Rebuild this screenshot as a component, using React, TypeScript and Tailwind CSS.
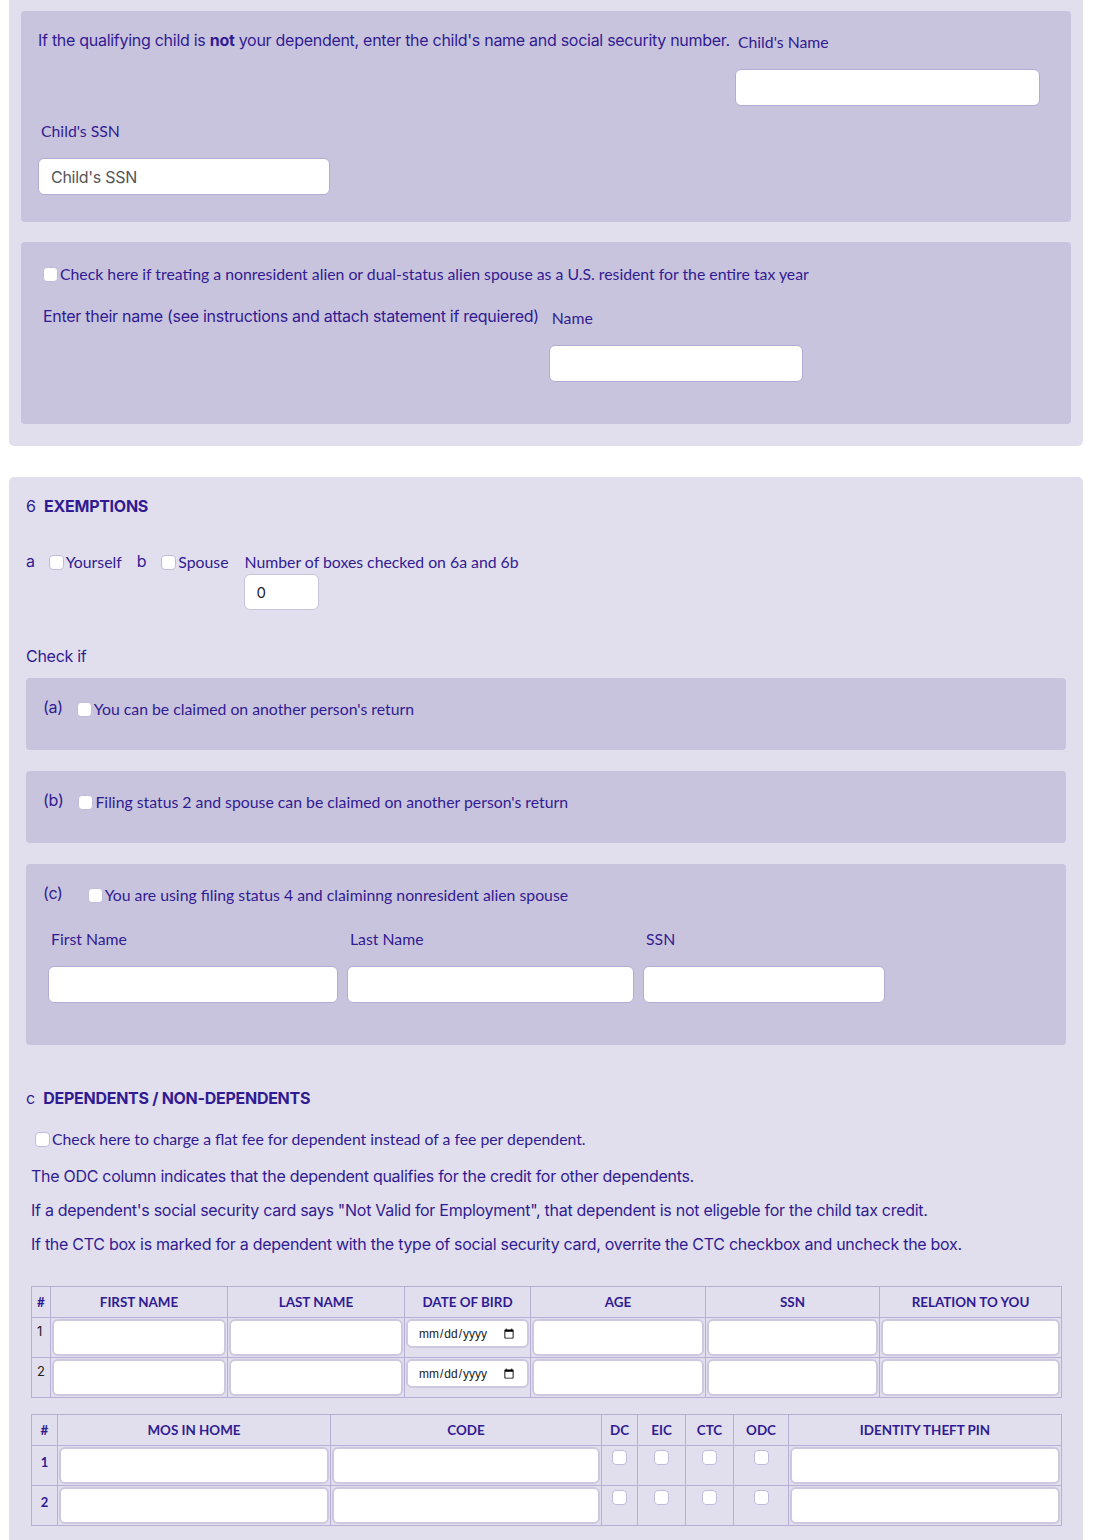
import React from "react";

const inter = "font-['Inter','Liberation_Sans',sans-serif] tracking-[-0.28px]";
const lato = "font-['Lato','Liberation_Sans',sans-serif]";
const txt = "text-[#311b92]";
const lbl = `text-[15.8px] ${lato} ${txt}`;

function Box({ className = "" }: { className?: string }) {
  return (
    <input
      type="checkbox"
      className={`appearance-none w-[15px] h-[15px] bg-white rounded-[4px] border border-[#c2bcdb] shrink-0 ${className}`}
    />
  );
}

function Field({ className = "", placeholder }: { className?: string; placeholder?: string }) {
  return (
    <input
      type="text"
      placeholder={placeholder}
      className={`block h-[37px] bg-white rounded-[6px] border border-[#b3abd4] px-[12px] text-[16px] ${inter} text-[#222] placeholder:text-[#555] outline-none ${className}`}
    />
  );
}

function CellInput() {
  return (
    <input
      type="text"
      className="block w-full h-[37px] bg-white rounded-[6px] border-2 border-[#cdc8e0] outline-none"
    />
  );
}

function DateInput() {
  return (
    <input
      type="date"
      className="block w-full h-[29px] bg-white rounded-[6px] border-2 border-[#cdc8e0] pl-[10px] pr-[10px] text-[12px] font-['Liberation_Sans',sans-serif] text-[#222] outline-none"
    />
  );
}

const th = `border border-[#b7b0d4] h-[31px] p-0 text-center align-middle text-[13.4px] font-bold ${lato} ${txt}`;
const td = "border border-[#b7b0d4] p-0 align-top";

export default function App() {
  return (
    <div className="bg-white min-h-[1540px] pb-[40px]">
      {/* Panel 1 */}
      <div className="ml-[9px] w-[1074px] bg-[#e1dfed] rounded-b-[5px] pl-[12px] pr-[12px] pt-[11px] pb-[22px]">
        <div className="bg-[#c9c4dd] rounded-[4px] pl-[17px] pr-[17px] pt-[17px] pb-[27px]">
          <div className="flex items-start">
            <p className={`text-[16px] leading-[24px] ${inter} ${txt} whitespace-nowrap`}>
              If the qualifying child is <b>not</b> your dependent, enter the child's name and social security number.
            </p>
            <div className="ml-[5px] pt-[2px] flex flex-col">
              <span className={`pl-[3px] leading-[24px] ${lbl}`}>Child's Name</span>
              <Field className="mt-[15px] w-[305px]" />
            </div>
          </div>
          <div className="mt-[13px] flex flex-col">
            <span className={`pl-[3px] leading-[24px] ${lbl}`}>Child's SSN</span>
            <Field className="mt-[15px] w-[292px]" placeholder="Child's SSN" />
          </div>
        </div>

        <div className="mt-[20px] bg-[#c9c4dd] rounded-[4px] pl-[22px] pr-[22px] pt-[20px] pb-[42px]">
          <label className="flex items-center h-[24px]">
            <Box />
            <span className={`ml-[2px] ${lbl}`}>
              Check here if treating a nonresident alien or dual-status alien spouse as a U.S. resident for the entire tax year
            </span>
          </label>
          <div className="mt-[18px] flex items-start">
            <p className={`text-[16px] leading-[24px] ${inter} ${txt} whitespace-nowrap`}>
              Enter their name (see instructions and attach statement if requiered)
            </p>
            <div className="ml-[10px] pt-[2px] flex flex-col">
              <span className={`pl-[3px] leading-[24px] ${lbl}`}>Name</span>
              <Field className="mt-[15px] w-[254px]" />
            </div>
          </div>
        </div>
      </div>

      {/* Panel 2 */}
      <div className="mt-[31px] ml-[9px] w-[1074px] bg-[#e1dfed] rounded-[5px] pl-[17px] pr-[17px] pt-[17px] pb-[40px]">
        <h2 className={`text-[16px] leading-[24px] ${inter} ${txt}`}>
          6&nbsp;&nbsp;<b>EXEMPTIONS</b>
        </h2>

        <div className="mt-[31px] flex items-start">
          <span className={`text-[16px] leading-[24px] ${inter} ${txt}`}>a</span>
          <label className="ml-[14px] flex items-center h-[26px]">
            <Box />
            <span className={`ml-[2px] ${lbl}`}>Yourself</span>
          </label>
          <span className={`ml-[15px] text-[16px] leading-[24px] ${inter} ${txt}`}>b</span>
          <label className="ml-[15px] flex items-center h-[26px]">
            <Box />
            <span className={`ml-[2px] ${lbl}`}>Spouse</span>
          </label>
          <div className="ml-[15px] flex flex-col">
            <span className={`pl-[1px] leading-[26px] ${lbl}`}>Number of boxes checked on 6a and 6b</span>
            <input
              type="text"
              defaultValue="0"
              className={`block mt-[-1px] w-[75px] h-[36px] bg-white rounded-[6px] border border-[#c9c3df] px-[12px] text-[15px] ${inter} text-[#222] outline-none`}
            />
          </div>
        </div>

        <p className={`mt-[34px] text-[16px] leading-[24px] ${inter} ${txt}`}>Check if</p>

        <div className="mt-[10px] bg-[#c9c4dd] rounded-[4px] pl-[17px] pt-[17px] pb-[27px]">
          <div className="flex items-start">
            <span className={`text-[16px] leading-[24px] ${inter} ${txt}`}>(a)</span>
            <label className="ml-[14px] flex items-center h-[28px]">
              <Box />
              <span className={`ml-[2px] ${lbl}`}>You can be claimed on another person's return</span>
            </label>
          </div>
        </div>

        <div className="mt-[21px] bg-[#c9c4dd] rounded-[4px] pl-[17px] pt-[17px] pb-[27px]">
          <div className="flex items-start">
            <span className={`text-[16px] leading-[24px] ${inter} ${txt}`}>(b)</span>
            <label className="ml-[15px] flex items-center h-[28px]">
              <Box />
              <span className={`ml-[2px] ${lbl}`}>Filing status 2 and spouse can be claimed on another person's return</span>
            </label>
          </div>
        </div>

        <div className="mt-[21px] bg-[#c9c4dd] rounded-[4px] pl-[17px] pr-[17px] pt-[17px] pb-[42px]">
          <div className="flex items-start">
            <span className={`text-[16px] leading-[24px] ${inter} ${txt}`}>(c)</span>
            <label className="ml-[25px] flex items-center h-[28px]">
              <Box />
              <span className={`ml-[2px] ${lbl}`}>You are using filing status 4 and claiminng nonresident alien spouse</span>
            </label>
          </div>
          <div className="mt-[18px] ml-[5px] flex gap-[9px]">
            <div className="flex flex-col">
              <span className={`pl-[3px] leading-[24px] ${lbl}`}>First Name</span>
              <Field className="mt-[15px] w-[290px]" />
            </div>
            <div className="flex flex-col">
              <span className={`pl-[3px] leading-[24px] ${lbl}`}>Last Name</span>
              <Field className="mt-[15px] w-[287px]" />
            </div>
            <div className="flex flex-col">
              <span className={`pl-[3px] leading-[24px] ${lbl}`}>SSN</span>
              <Field className="mt-[15px] w-[242px]" />
            </div>
          </div>
        </div>

        <h2 className={`mt-[41px] text-[16px] leading-[24px] ${inter} ${txt}`}>
          c&nbsp;&nbsp;<b>DEPENDENTS / NON-DEPENDENTS</b>
        </h2>

        <label className="mt-[17px] ml-[9px] flex items-center h-[24px]">
          <Box />
          <span className={`ml-[2px] ${lbl}`}>Check here to charge a flat fee for dependent instead of a fee per dependent.</span>
        </label>

        <div className={`ml-[5px] text-[16px] leading-[24px] ${inter} ${txt}`}>
          <p className="mt-[13px]">The ODC column indicates that the dependent qualifies for the credit for other dependents.</p>
          <p className="mt-[10px]">If a dependent's social security card says "Not Valid for Employment", that dependent is not eligeble for the child tax credit.</p>
          <p className="mt-[10px]">If the CTC box is marked for a dependent with the type of social security card, overrite the CTC checkbox and uncheck the box.</p>
        </div>

        <table className="mt-[30px] ml-[5px] w-[1030px] table-fixed border-collapse">
          <colgroup>
            <col className="w-[19px]" />
            <col className="w-[177px]" />
            <col className="w-[177px]" />
            <col className="w-[126px]" />
            <col className="w-[175px]" />
            <col className="w-[174px]" />
            <col className="w-[182px]" />
          </colgroup>
          <thead>
            <tr>
              <th className={th}>#</th>
              <th className={th}>FIRST NAME</th>
              <th className={th}>LAST NAME</th>
              <th className={th}>DATE OF BIRD</th>
              <th className={th}>AGE</th>
              <th className={th}>SSN</th>
              <th className={th}>RELATION TO YOU</th>
            </tr>
          </thead>
          <tbody>
            {[1, 2].map((n) => (
              <tr key={n}>
                <td className={`${td} pl-[5px] pt-[4px] text-[13px] ${inter} text-[#222]`}>{n}</td>
                <td className={`${td} px-[1px] py-[1px]`}><CellInput /></td>
                <td className={`${td} px-[1px] py-[1px]`}><CellInput /></td>
                <td className={`${td} px-[1px] py-[1px]`}><DateInput /></td>
                <td className={`${td} px-[1px] py-[1px]`}><CellInput /></td>
                <td className={`${td} px-[1px] py-[1px]`}><CellInput /></td>
                <td className={`${td} px-[1px] py-[1px]`}><CellInput /></td>
              </tr>
            ))}
          </tbody>
        </table>

        <table className="mt-[16px] ml-[5px] w-[1030px] table-fixed border-collapse">
          <colgroup>
            <col className="w-[26px]" />
            <col className="w-[273px]" />
            <col className="w-[271px]" />
            <col className="w-[36px]" />
            <col className="w-[48px]" />
            <col className="w-[48px]" />
            <col className="w-[55px]" />
            <col className="w-[273px]" />
          </colgroup>
          <thead>
            <tr>
              <th className={th}>#</th>
              <th className={th}>MOS IN HOME</th>
              <th className={th}>CODE</th>
              <th className={th}>DC</th>
              <th className={th}>EIC</th>
              <th className={th}>CTC</th>
              <th className={th}>ODC</th>
              <th className={th}>IDENTITY THEFT PIN</th>
            </tr>
          </thead>
          <tbody>
            {[1, 2].map((n) => (
              <tr key={n}>
                <td className={`border border-[#b7b0d4] p-0 align-middle text-center pb-[6px] text-[13px] font-bold ${lato} ${txt}`}>{n}</td>
                <td className={`${td} px-[1px] py-[1px]`}><CellInput /></td>
                <td className={`${td} px-[1px] py-[1px]`}><CellInput /></td>
                {[0, 1, 2, 3].map((k) => (
                  <td key={k} className={`${td} pt-[4px] text-center`}>
                    <Box className="inline-block align-top w-[14px] h-[14px]" />
                  </td>
                ))}
                <td className={`${td} px-[1px] py-[1px]`}><CellInput /></td>
              </tr>
            ))}
          </tbody>
        </table>
      </div>
    </div>
  );
}
